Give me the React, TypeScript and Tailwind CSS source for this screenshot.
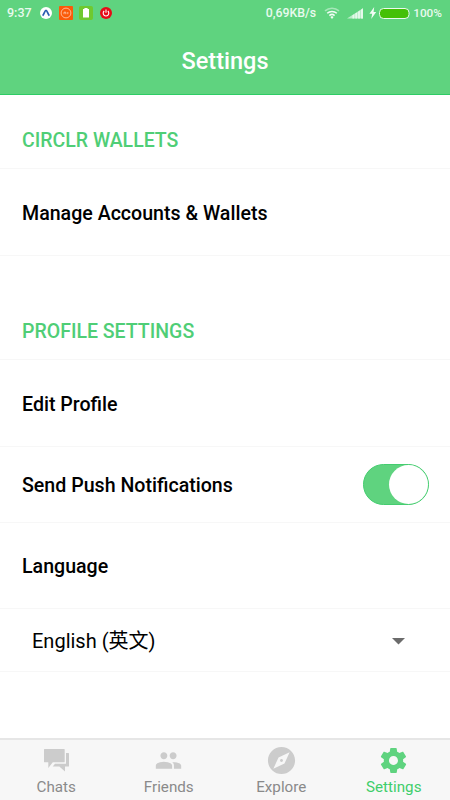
import type { ReactNode } from "react";
import { IoMdPeople, IoMdCompass, IoMdSettings } from "react-icons/io";

// two overlapping speech bubbles
function ChatIcon({ className }: { className?: string }) {
  return (
    <svg className={className} width="31" height="31" viewBox="-3 -4 31 31" fill="currentColor">
      <path d="M.6 0h19.5q.6 0 .6.6v12.1q0 .6-.6.6H8.8L4.3 19v-5.7H.6q-.6 0-.6-.6V.6Q0 0 .6 0z" />
      <path d="M22 4h2.4q.6 0 .6.6v12.3q0 .6-.6.6H21v4.9l-5.7-4.9H8.7l2.3-2.7h11z" />
    </svg>
  )
}

const tabs = [
  { name: 'Chats', icon: ChatIcon, size: 'h-[31px] w-[31px]' },
  { name: 'Friends', icon: IoMdPeople, size: 'h-[31px] w-[29px]' },
  { name: 'Explore', icon: IoMdCompass, size: 'h-[31px] w-[31px]' },
  { name: 'Settings', icon: IoMdSettings, size: 'h-[31px] w-[31px]' },
];

function StatusBar() {
  return (
    <div className="flex h-[26px] items-center pl-[7px] pr-[8px] text-[12px] font-medium text-[#e9faee]">
      <span className="w-[33px] text-[12.5px]">9:37</span>
      <svg width="12" height="12" viewBox="0 0 12 12">
        <circle cx="6" cy="6" r="6" fill="#fff" />
        <path d="M2.6 8.6C4 7.4 4.8 3.4 6 3.4S8 7.4 9.4 8.6" fill="none" stroke="#2a5db0" strokeWidth="1.7" />
      </svg>
      <svg className="ml-[7px]" width="14" height="14" viewBox="0 0 14 14">
        <rect width="14" height="14" rx="1" fill="#fb5a08" />
        <circle cx="7" cy="7" r="4.9" fill="none" stroke="#ffc4a3" strokeWidth=".9" />
        <path d="M5 8.2V6.2h1.8v2M8.8 6v2.2" fill="none" stroke="#ffd2b8" strokeWidth=".8" />
      </svg>
      <svg className="ml-[6px]" width="14" height="14" viewBox="0 0 14 14">
        <rect width="14" height="14" rx="2" fill="#6fc92f" />
        <path d="M4 3h1.4V2h3.2v1H10v8.5H4z" fill="#fff" />
      </svg>
      <svg className="ml-[7px]" width="12" height="12" viewBox="0 0 12 12">
        <circle cx="6" cy="6" r="6" fill="#e60b16" />
        <path d="M4.2 4a2.8 2.8 0 1 0 3.6 0M6 2.6v3.2" fill="none" stroke="#fff" strokeWidth="1.1" />
      </svg>
      <span className="ml-auto text-[12.3px]">0,69KB/s</span>
      <svg className="ml-[8px]" width="16" height="12" viewBox="0 0 16 12">
        <path d="M1 3.9a10.4 10.4 0 0 1 14 0" fill="none" stroke="#a5e7b8" strokeWidth="1.5" />
        <path d="M3.2 6.3a7 7 0 0 1 9.6 0M5.4 8.6a3.8 3.8 0 0 1 5.2 0" fill="none" stroke="#f3fcf5" strokeWidth="1.5" />
        <path d="M6.4 10l1.6-1 1.6 1L8 12z" fill="#f3fcf5" />
      </svg>
      <svg className="ml-[7px]" width="17" height="11" viewBox="0 0 17 11">
        <path d="M0 10.5L16 .3v10.2z" fill="#b9edc8" />
        <path d="M5.5 10.5h1.8V6.2l-1.8 1zM8.3 10.5h1.8V4.4l-1.8 1.2zM11.1 10.5h1.8V2.6l-1.8 1.2zM14 10.5h2V.3l-2 1.5z" fill="#e6f9eb" />
      </svg>
      <svg className="ml-[5px]" width="8" height="12" viewBox="0 0 8 12">
        <path d="M5.2 0L.4 6.8h2.8L2.2 12l5-7H4.6z" fill="#f3fcf5" />
      </svg>
      <svg className="ml-[2px]" width="31" height="11" viewBox="0 0 31 11">
        <rect x=".5" y=".5" width="29.5" height="10" rx="4" fill="#44c006" stroke="#e9faee" />
      </svg>
      <span className="ml-[3px] text-[11.8px] leading-[18px]">100%</span>
    </div>
  )
}

function SectionTitle({ children }: { children: ReactNode }) {
  return (
    <h2 className="flex h-[74px] items-center border-b border-[#f7f7f7] px-[22px] pt-[19px] text-[19.5px] font-medium text-[#4fce76]">
      {children}
    </h2>
  )
}

export default function App() {
  return (
    <div className="flex h-[800px] w-[450px] flex-col overflow-hidden bg-white font-['Roboto','Noto_Sans_CJK_SC',sans-serif] text-black">
      <header className="h-[95px] border-b border-[#2ecc65] bg-[#5fd37f]">
        <StatusBar />
        <h1 className="flex h-[72px] items-center justify-center text-[23.5px] font-medium text-white">Settings</h1>
      </header>

      <main className="flex-1 text-[19.6px] font-medium">
        <SectionTitle>CIRCLR WALLETS</SectionTitle>
        <div className="flex h-[87px] items-center border-b border-[#f7f7f7] px-[22px] pt-1">Manage Accounts &amp; Wallets</div>

        <div className="h-[30px]" />
        <SectionTitle>PROFILE SETTINGS</SectionTitle>
        <div className="flex h-[87px] items-center border-b border-[#f7f7f7] px-[22px] pt-1">Edit Profile</div>
        <div className="flex h-[76px] items-center justify-between border-b border-[#f7f7f7] pl-[22px] pr-[21.5px]">
          <span className="pt-[3px]">Send Push Notifications</span>
          <button className="flex h-[41px] w-[65.5px] justify-end rounded-full border border-[#45cd70] bg-[#5fd37f]">
            <span className="h-[39px] w-[39px] rounded-full bg-white" />
          </button>
        </div>
        <div className="flex h-[86px] items-center border-b border-[#f7f7f7] px-[22px] pt-[3px]">Language</div>
        <div className="flex h-[63px] items-center justify-between border-b border-[#f7f7f7] pl-8 pr-[45px] text-[20px] font-normal">
          <span className="pt-[2px]">English (英文)</span>
          <svg className="mt-[2px]" width="13" height="7" viewBox="0 0 13 7">
            <path d="M0 0h13L6.5 6.5z" fill="#6b6b6b" />
          </svg>
        </div>
      </main>

      <nav className="flex h-[62px] border-t-2 border-[#e6e6e6] bg-[#f7f7f7]">
        {tabs.map(({ name, icon: Icon, size }) => (
          <div
            key={name}
            className={`flex flex-1 flex-col items-center pt-[5px] text-[15.2px] leading-[22px] ${name === 'Settings' ? 'text-[#3fce6b]' : 'text-[#8a8a8a]'}`}
          >
            <Icon className={`shrink-0 ${size} ${name === 'Settings' ? 'text-[#5fd37f]' : 'text-[#cccccc]'}`} />
            <span>{name}</span>
          </div>
        ))}
      </nav>
    </div>
  )
}
